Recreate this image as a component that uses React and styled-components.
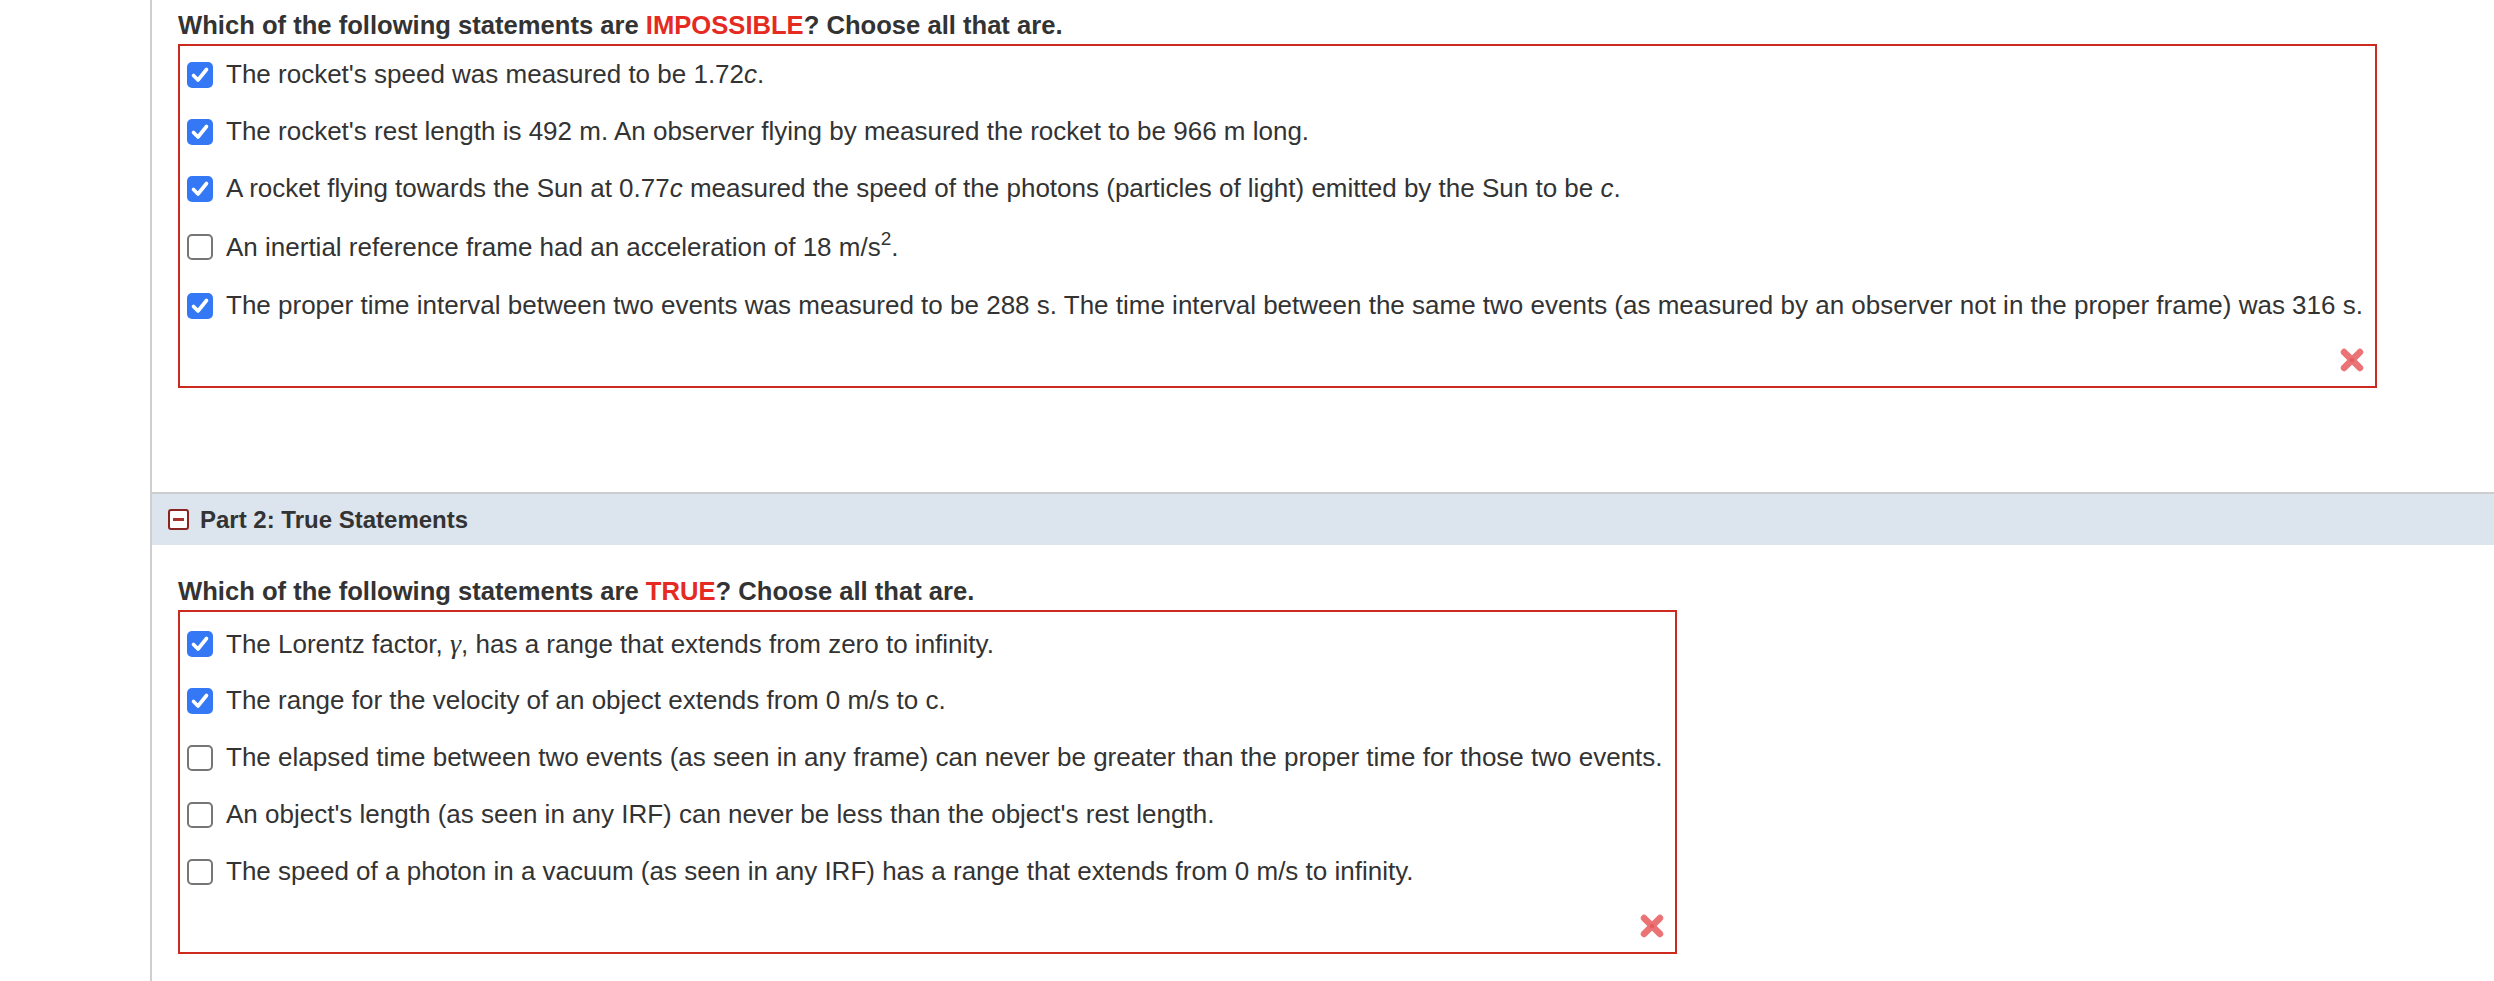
import styled, { createGlobalStyle } from 'styled-components';

const GlobalStyle = createGlobalStyle`
  html, body {
    margin: 0;
    padding: 0;
    background: #fff;
  }
  body {
    font-family: "Liberation Sans", Arial, sans-serif;
    color: #333;
  }
`;

const Page = styled.div`
  display: flex;
  min-height: 981px;
`;

const Gutter = styled.div`
  width: 150px;
  flex-shrink: 0;
  border-right: 2px solid #cfcfcf;
`;

const Main = styled.div`
  flex: 1;
  display: flex;
  flex-direction: column;
`;

const Section = styled.div`
  padding: ${p => p.$top}px 0 0 26px;
`;

const Question = styled.div`
  font-size: 25.6px;
  font-weight: bold;
  line-height: 28px;
  margin-bottom: 5px;
  color: #333;
`;

const Hot = styled.span`
  color: #e52a22;
`;

const AnswerBox = styled.div`
  width: fit-content;
  border: 2px solid #cc2a1f;
  padding: ${p => p.$pad}px 12px 0 7px;
  display: flex;
  flex-direction: column;
`;

const Choice = styled.label`
  display: flex;
  align-items: center;
  gap: 13px;
  height: ${p => (p.$tall ? 60 : 57)}px;
  font-size: 26px;
  white-space: nowrap;
  color: #333;
`;

const Box = styled.span`
  width: 26px;
  height: 26px;
  box-sizing: border-box;
  flex-shrink: 0;
  border-radius: 5px;
  display: flex;
  align-items: center;
  justify-content: center;
  background: ${p => (p.$checked ? '#3478f6' : '#fff')};
  border: ${p => (p.$checked ? 'none' : '2px solid #767676')};
`;

const Em = styled.i`
  font-style: italic;
`;

const Gamma = styled.i`
  font-family: "Liberation Serif", "Times New Roman", serif;
  font-style: italic;
  font-size: 28px;
`;

const Sup = styled.sup`
  font-size: 19px;
  line-height: 0;
  vertical-align: 11px;
`;

const Verdict = styled.div`
  height: 52px;
  display: flex;
  align-items: center;
  justify-content: flex-end;
  margin-right: -3px;
`;

const PartHeader = styled.div`
  margin-top: 104px;
  border-top: 2px solid #cdcdcd;
  background: #dce5ee;
  height: 51px;
  display: flex;
  align-items: center;
  gap: 11px;
  padding-left: 16px;
  font-size: 24px;
  font-weight: bold;
  color: #333;
`;

const Collapse = styled.span`
  width: 21px;
  height: 21px;
  box-sizing: border-box;
  border: 2px solid #8a2420;
  border-radius: 3px;
  background: #fff;
  display: flex;
  align-items: center;
  justify-content: center;
  &::after {
    content: '';
    width: 11px;
    height: 3px;
    background: #a8322c;
  }
`;

const Check = ({ checked }) => (
  <Box $checked={checked}>
    {checked && (
      <svg width="20" height="20" viewBox="0 0 20 20">
        <path d="M3.5 10.5 L8 15 L16.5 4.5" fill="none" stroke="#fff" strokeWidth="3.6" strokeLinecap="round" strokeLinejoin="round" />
      </svg>
    )}
  </Box>
);

const WrongMark = () => (
  <svg width="28" height="28" viewBox="0 0 30 30">
    <g stroke="#ea6062" strokeWidth="7" strokeLinecap="round" opacity="0.88">
      <line x1="6.5" y1="6.5" x2="23.5" y2="23.5" />
      <line x1="23.5" y1="6.5" x2="6.5" y2="23.5" />
    </g>
    <circle cx="15" cy="15" r="2.5" fill="#d94446" opacity="0.45" />
  </svg>
);

const impossible = [
  { on: true, text: <>The rocket's speed was measured to be 1.72<Em>c</Em>.</> },
  { on: true, text: <>The rocket's rest length is 492 m. An observer flying by measured the rocket to be 966 m long.</> },
  { on: true, text: <>A rocket flying towards the Sun at 0.77<Em>c</Em> measured the speed of the photons (particles of light) emitted by the Sun to be <Em>c</Em>.</> },
  { on: false, tall: true, text: <>An inertial reference frame had an acceleration of 18 m/s<Sup>2</Sup>.</> },
  { on: true, text: <>The proper time interval between two events was measured to be 288 s. The time interval between the same two events (as measured by an observer not in the proper frame) was 316 s.</> },
];

const truths = [
  { on: true, text: <>The Lorentz factor, <Gamma>γ</Gamma>, has a range that extends from zero to infinity.</> },
  { on: true, text: <>The range for the velocity of an object extends from 0 m/s to c.</> },
  { on: false, text: <>The elapsed time between two events (as seen in any frame) can never be greater than the proper time for those two events.</> },
  { on: false, text: <>An object's length (as seen in any IRF) can never be less than the object's rest length.</> },
  { on: false, text: <>The speed of a photon in a vacuum (as seen in any IRF) has a range that extends from 0 m/s to infinity.</> },
];

const Answers = ({ items, pad = 0 }) => (
  <AnswerBox $pad={pad}>
    {items.map((item, i) => (
      <Choice key={i} $tall={item.tall}>
        <Check checked={item.on} />
        <span>{item.text}</span>
      </Choice>
    ))}
    <Verdict>
      <WrongMark />
    </Verdict>
  </AnswerBox>
);

export default function App() {
  return (
    <>
      <GlobalStyle />
      <Page>
        <Gutter />
        <Main>
          <Section $top={11}>
            <Question>
              Which of the following statements are <Hot>IMPOSSIBLE</Hot>? Choose all that are.
            </Question>
            <Answers items={impossible} />
          </Section>
          <PartHeader>
            <Collapse />
            Part 2: True Statements
          </PartHeader>
          <Section $top={32}>
            <Question>
              Which of the following statements are <Hot>TRUE</Hot>? Choose all that are.
            </Question>
            <Answers items={truths} pad={3} />
          </Section>
        </Main>
      </Page>
    </>
  );
}
